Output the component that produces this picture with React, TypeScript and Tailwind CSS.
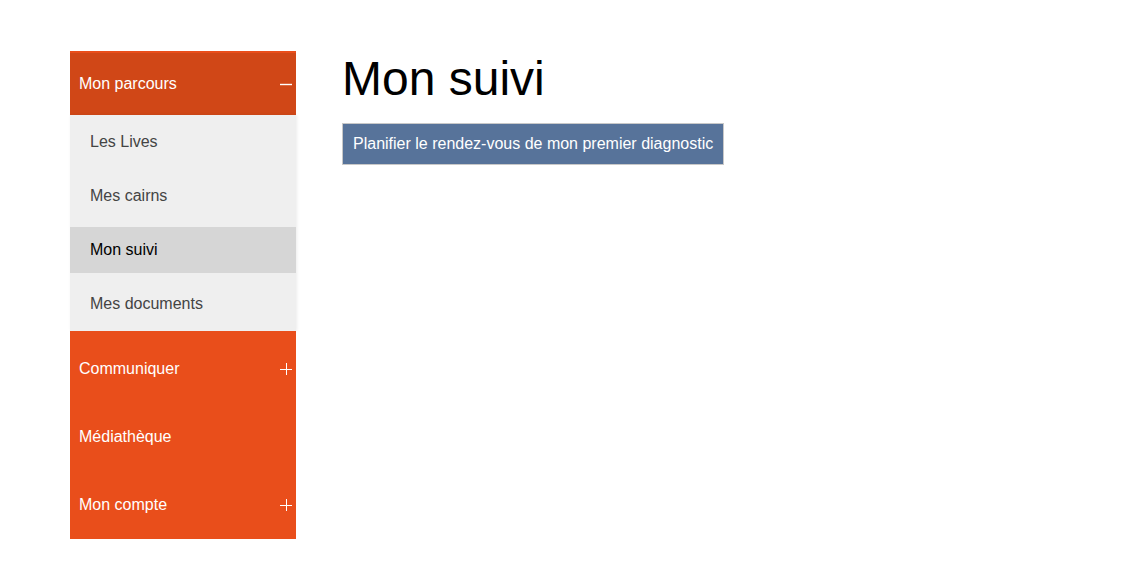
import React from "react";

const font = { fontFamily: '"Liberation Sans", Arial, sans-serif' };

function Plus() {
  return (
    <svg width="12" height="12" viewBox="0 0 12 12" className="block">
      <path d="M0 6.5H12M6.5 0V12" stroke="white" strokeWidth="1" />
    </svg>
  );
}

function Minus() {
  return (
    <svg width="12" height="12" viewBox="0 0 12 12" className="block">
      <path d="M0 6.5H12" stroke="white" strokeWidth="1.4" />
    </svg>
  );
}

export default function App() {
  const sub = ["Les Lives", "Mes cairns", "Mon suivi", "Mes documents"];
  return (
    <div className="min-h-[574px] w-[1140px] bg-white" style={font}>
      <div className="flex pt-[51px] pl-[70px]">
        <nav className="w-[226px] shrink-0">
          <div className="h-[64px] bg-[#d04717] border-t-2 border-[#e94e1b] flex items-center justify-between pl-[9px] pr-[4px] text-white text-[16px]">
            <span>Mon parcours</span>
            <Minus />
          </div>
          <div className="bg-[#efefef] shadow-[1px_0_3px_rgba(0,0,0,0.08)]">
            {sub.map((s) => (
              <div key={s} className="h-[54px] py-[4px]">
                <div
                  className={
                    "h-full flex items-center pl-[20px] text-[16px] " +
                    (s === "Mon suivi" ? "bg-[#d6d6d6] text-black" : "text-[#444]")
                  }
                >
                  {s}
                </div>
              </div>
            ))}
          </div>
          <div className="bg-[#e94e1b] text-white text-[16px]">
            <div className="h-[72px] pt-[4px] flex items-center justify-between pl-[9px] pr-[4px]">
              <span>Communiquer</span>
              <Plus />
            </div>
            <div className="h-[68px] flex items-center pl-[9px]">
              <span>Médiathèque</span>
            </div>
            <div className="h-[68px] flex items-center justify-between pl-[9px] pr-[4px]">
              <span>Mon compte</span>
              <Plus />
            </div>
          </div>
        </nav>
        <main className="pl-[46px]">
          <h1 className="text-[48px] leading-[56px] text-black">Mon suivi</h1>
          <button className="mt-[16px] h-[42px] px-[10px] bg-[#57739a] border border-[#c8c8c8] text-white text-[16px] flex items-center">
            Planifier le rendez-vous de mon premier diagnostic
          </button>
        </main>
      </div>
    </div>
  );
}
